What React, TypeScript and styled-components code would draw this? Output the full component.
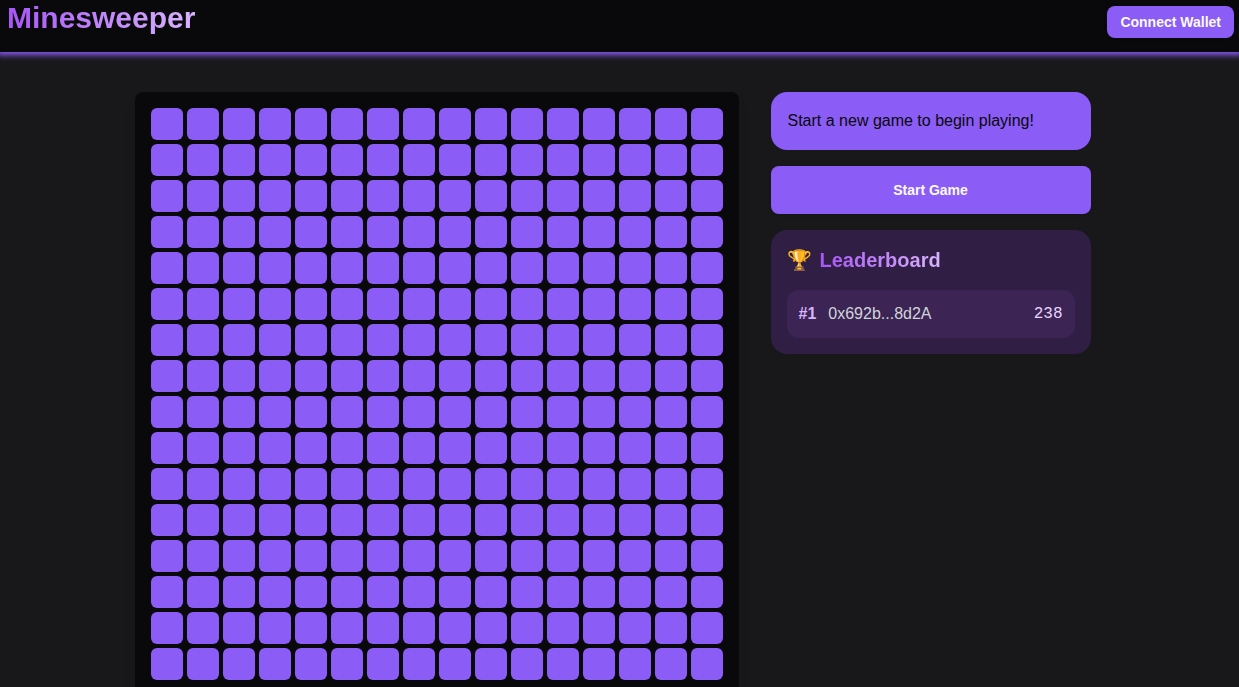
import React from 'react';
import styled, { createGlobalStyle, css } from 'styled-components';

const GlobalStyle = createGlobalStyle`
  *, *::before, *::after { box-sizing: border-box; }
  body {
    margin: 0;
    background: #18181b;
    color: #09090b;
    font-family: "Liberation Sans", Arial, sans-serif;
    font-size: 16px;
    line-height: 24px;
  }
  h1, h2, p, ol { margin: 0; padding: 0; }
`;

const gradientText = css`
  background: linear-gradient(to right, #a855f7, #d8b4fe);
  background-clip: text;
  -webkit-background-clip: text;
  color: transparent;
`;

const Header = styled.header`
  display: flex;
  justify-content: space-between;
  align-items: flex-start;
  height: 52px;
  padding: 0 5px 0 7px;
  background: #09090b;
  box-shadow: 0 0 6px 3px #8b5cf6;
`;

const Title = styled.h1`
  ${gradientText}
  font-size: 30px;
  line-height: 36px;
  font-weight: 700;
`;

const Button = styled.button<{ $size: 'small' | 'large' }>`
  border: 0;
  border-radius: 8px;
  height: ${({ $size }) => ($size === 'small' ? 32 : 48)}px;
  padding: 0 13px;
  background: #8b5cf6;
  box-shadow: 0 1px 3px rgba(0, 0, 0, 0.1);
  color: #fafafa;
  font: 700 14px/20px "Liberation Sans", Arial, sans-serif;
  cursor: pointer;
`;

const HeaderActions = styled.div`
  display: flex;
  padding-top: 6px;
`;

const Main = styled.main`
  display: flex;
  flex-wrap: wrap;
  justify-content: center;
  align-items: flex-start;
  gap: 32px;
  padding: 40px 14px 40px 0;
`;

const Board = styled.section`
  display: grid;
  grid-template-columns: repeat(16, 32px);
  gap: 4px;
  padding: 16px;
  border-radius: 8px;
  background: #09090b;
  box-shadow: 0 10px 15px -3px rgba(0, 0, 0, 0.1);
`;

const Cell = styled.button`
  width: 32px;
  height: 32px;
  padding: 0;
  border: 0;
  border-radius: 6px;
  background: #8b5cf6;
  cursor: pointer;
`;

const Sidebar = styled.aside`
  display: flex;
  flex-direction: column;
  gap: 16px;
  width: 320px;
`;

const Status = styled.p`
  padding: 17px;
  border-radius: 16px;
  background: #8b5cf6;
`;

const Leaderboard = styled.section`
  display: flex;
  flex-direction: column;
  gap: 16px;
  padding: 16px;
  border-radius: 16px;
  background: #301e44;
`;

const LeaderboardHeading = styled.h2`
  display: flex;
  align-items: center;
  gap: 8px;
  font-size: 20px;
  line-height: 28px;
  font-weight: 700;
`;

const GradientLabel = styled.span`
  ${gradientText}
`;

const Scores = styled.ol`
  list-style: none;
`;

const ScoreRow = styled.li`
  display: flex;
  align-items: center;
  gap: 12px;
  padding: 12px;
  border-radius: 12px;
  background: #3c2454;
`;

const Rank = styled.span`
  color: #d8b4fe;
  font-weight: 700;
`;

const Player = styled.span`
  color: #d1d5db;
`;

const Score = styled.span`
  margin-left: auto;
  color: #e9d5ff;
  font-family: "Liberation Mono", monospace;
`;

const SIZE = 16;
const cells = Array.from({ length: SIZE * SIZE }, (_, i) => i);
const leaders = [{ player: '0x692b...8d2A', score: 238 }];

export default function App() {
  return (
    <>
      <GlobalStyle />
      <Header>
        <Title>Minesweeper</Title>
        <HeaderActions>
          <Button type="button" $size="small">Connect Wallet</Button>
        </HeaderActions>
      </Header>
      <Main>
        <Board aria-label="Minefield">
          {cells.map((i) => (
            <Cell
              key={i}
              type="button"
              aria-label={`Row ${Math.floor(i / SIZE) + 1}, column ${(i % SIZE) + 1}`}
            />
          ))}
        </Board>
        <Sidebar>
          <Status role="status">Start a new game to begin playing!</Status>
          <Button type="button" $size="large">Start Game</Button>
          <Leaderboard>
            <LeaderboardHeading>
              <span aria-hidden="true">🏆</span>
              <GradientLabel>Leaderboard</GradientLabel>
            </LeaderboardHeading>
            <Scores>
              {leaders.map(({ player, score }, i) => (
                <ScoreRow key={player}>
                  <Rank>#{i + 1}</Rank>
                  <Player>{player}</Player>
                  <Score>{score}</Score>
                </ScoreRow>
              ))}
            </Scores>
          </Leaderboard>
        </Sidebar>
      </Main>
    </>
  );
}
